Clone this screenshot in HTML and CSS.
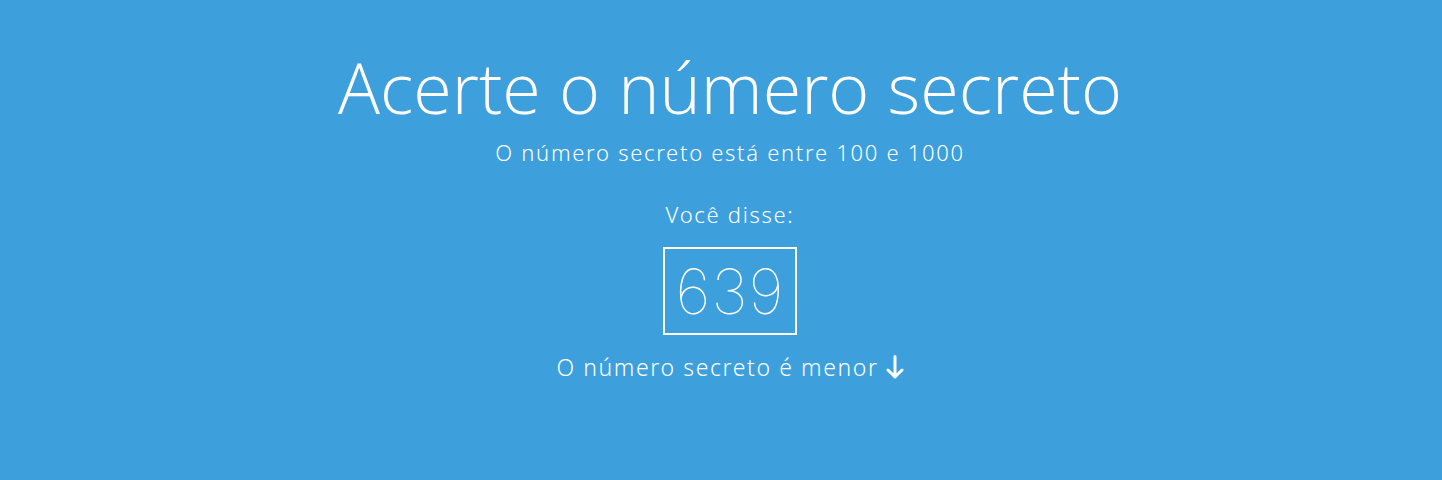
FILE: index.html
```html
<!DOCTYPE html>
<html lang="pt-BR">
<head>
<meta charset="utf-8">
<title>Jogo do número secreto</title>
<link rel="stylesheet" href="styles.css">
</head>
<body>
<main class="game">
  <h1 class="title">Acerte o número secreto</h1>
  <p class="subtitle">O número secreto está entre 100 e 1000</p>
  <div class="guess">
    <div class="guess-label">Você disse:</div>
    <span class="guess-box">639</span>
  </div>
  <div class="hint"><span>O número secreto é menor</span><svg class="arrow" width="18" height="24" viewBox="0 0 18 24" aria-hidden="true"><path d="M9 1.5V22M2 15L9 22L16 15" fill="none" stroke="#fff" stroke-width="3" stroke-linecap="round" stroke-linejoin="round"/></svg></div>
</main>
</body>
</html>
```
FILE: styles.css
```css
html, body {
  margin: 0;
  padding: 0;
}
body {
  background: #3d9fdc;
  color: #ffffff;
  font-family: "Noto Sans", "Open Sans", sans-serif;
  font-weight: 300;
  height: 480px;
  overflow: hidden;
}
.game {
  display: flex;
  flex-direction: column;
  align-items: center;
  text-align: center;
  padding-top: 46px;
  padding-left: 18px;
}
.title {
  margin: 0;
  font-family: "Open Sans", "Noto Sans", sans-serif;
  font-weight: 300;
  font-size: 70px;
  line-height: 82px;
}
.subtitle {
  margin: 10px 0 0;
  font-size: 22px;
  line-height: 28px;
  letter-spacing: 1.7px;
}
.guess {
  display: flex;
  flex-direction: column;
  align-items: center;
  margin-top: 34px;
}
.guess-label {
  font-size: 22px;
  line-height: 28px;
  letter-spacing: 1.7px;
}
.guess-box {
  margin-top: 19px;
  box-sizing: border-box;
  width: 134px;
  height: 88px;
  border: 2px solid #ffffff;
  display: flex;
  align-items: center;
  justify-content: center;
  font-family: "Inter", "Noto Sans", sans-serif;
  font-weight: 100;
  font-size: 62px;
  letter-spacing: 1px;
}
.hint {
  margin-top: 18px;
  font-size: 23px;
  line-height: 28px;
  letter-spacing: 1.6px;
  display: flex;
  align-items: center;
  gap: 7px;
}
.arrow {
  display: block;
}
```
